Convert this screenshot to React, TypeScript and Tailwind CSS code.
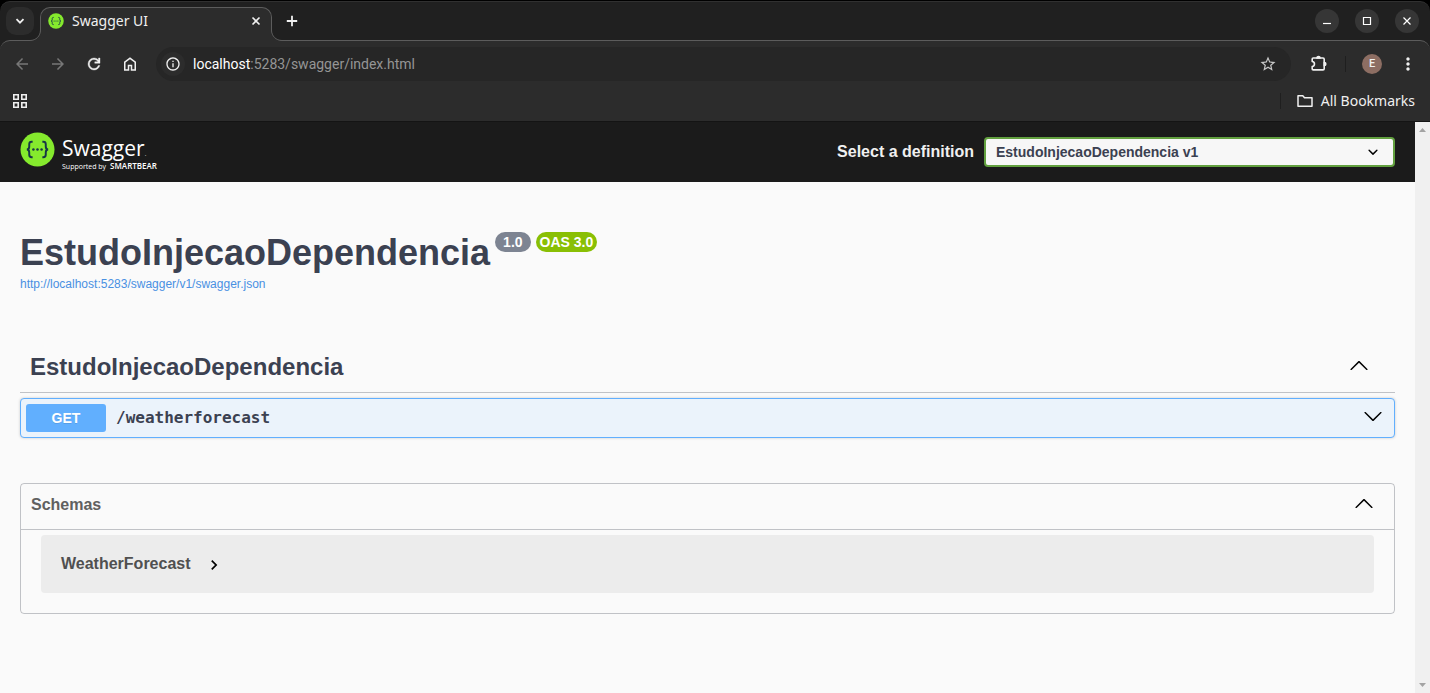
import type { ReactNode } from "react";
import { MdArrowBack, MdArrowForward, MdInfoOutline, MdMoreVert, MdStarBorder } from "react-icons/md";

const SPEC_URL = "http://localhost:5283/swagger/v1/swagger.json";

const PATHS = {
  arrowDown:
    "M17.418 6.109c.272-.268.709-.268.979 0s.271.701 0 .969l-7.908 7.83c-.27.268-.707.268-.979 0l-7.908-7.83c-.27-.268-.27-.701 0-.969.271-.268.709-.268.979 0L10 13.25l7.418-7.141z",
  arrowUp:
    "M17.418 14.908c.272.268.709.268.979 0s.271-.701 0-.969l-7.908-7.83c-.27-.268-.707-.268-.979 0l-7.908 7.83c-.27.268-.27.701 0 .969.271.268.709.268.979 0L10 7.767l7.418 7.141z",
  reload:
    "M12 20q-3.35 0-5.675-2.325T4 12t2.325-5.675T12 4q1.725 0 3.3.713T18 6.75V4h2v7h-7V9h4.2q-.8-1.4-2.188-2.2T12 6Q9.5 6 7.75 7.75T6 12t1.75 4.25T12 18q1.925 0 3.475-1.1T17.65 14h2.1q-.7 2.65-2.85 4.325T12 20Z",
  home: "M6 19h3v-6h6v6h3v-9l-6-4.5L6 10v9Zm-2 2V9l8-6 8 6v12h-7v-6h-2v6H4Z",
};

function LargeArrow({ up = false }: { up?: boolean }) {
  return (
    <svg viewBox="0 0 20 20" className="mb-1 size-5 shrink-0 fill-black" aria-hidden="true">
      <path d={up ? PATHS.arrowUp : PATHS.arrowDown} />
    </svg>
  );
}

function SwaggerMark({ className }: { className: string }) {
  return (
    <svg viewBox="0 0 36 36" className={className} aria-hidden="true">
      <circle cx="18" cy="18" r="17.5" fill="#85ea2d" />
      <g fill="none" stroke="#173647" strokeWidth="2">
        <path d="M13 10h-1c-2 0-2.500 1-2.500 2.500v2.500c0 2-.5 3-2.500 3 2 0 2.500 1 2.500 3v2.500c0 1.500.5 2.500 2.500 2.500h1" />
        <path d="M23 10h1c2 0 2.500 1 2.500 2.500v2.500c0 2 .5 3 2.500 3-2 0-2.500 1-2.500 3v2.500c0 1.500-.5 2.500-2.500 2.500h-1" />
      </g>
      <g fill="#173647">
        <circle cx="13.800" cy="18" r="1.300" />
        <circle cx="18" cy="18" r="1.300" />
        <circle cx="22.200" cy="18" r="1.300" />
      </g>
    </svg>
  );
}

function ToolbarButton({ label, dim = false, children }: { label: string; dim?: boolean; children: ReactNode }) {
  return (
    <button
      type="button"
      aria-label={label}
      className={`flex size-9 items-center justify-center ${dim ? "text-[#777777]" : "text-[#f0f0f0]"}`}
    >
      {children}
    </button>
  );
}

function WindowButton({ label, children }: { label: string; children: ReactNode }) {
  return (
    <button
      type="button"
      aria-label={label}
      className="flex size-6 items-center justify-center rounded-full bg-[#363636] text-white"
    >
      <svg viewBox="0 0 12 12" className="size-3 fill-none stroke-current" strokeWidth="1.200">
        {children}
      </svg>
    </button>
  );
}

function TabStrip() {
  return (
    <div className="bg-black pt-px">
      <div className="flex h-[39px] items-end rounded-t-[10px] border-t border-[#303030] bg-[#202020] pl-1.5">
        <button
          type="button"
          aria-label="Search tabs"
          className="mb-[5px] flex size-7 items-center justify-center rounded-[10px] bg-[#2c2c2c] text-[#f0f0f0]"
        >
          <svg viewBox="0 0 10 10" className="size-2.5 fill-none stroke-current" strokeWidth="1.800">
            <path d="M1.500 3.200 5 6.700l3.500-3.500" />
          </svg>
        </button>

        <div className="relative z-10 -mb-px ml-1.5 flex h-[34px] w-[232px] items-center rounded-t-[10px] border-x border-t border-[#5c5c5c] bg-[#2c2c2c] px-[7px] pb-2">
          {/* flared feet that join the tab to the toolbar */}
          <svg viewBox="0 0 11 11" className="absolute bottom-0 -left-[11px] size-[11px]">
            <path d="M11 0v11H0v-.5C6 10.500 10.500 6 10.500 0Z" fill="#2c2c2c" />
            <path d="M0 10.500C6 10.500 10.500 6 10.500 0" fill="none" stroke="#5c5c5c" />
          </svg>
          <svg viewBox="0 0 11 11" className="absolute -right-[11px] bottom-0 size-[11px]">
            <path d="M0 0v11h11v-.5C5 10.500.5 6 .5 0Z" fill="#2c2c2c" />
            <path d="M11 10.500C5 10.500.5 6 .5 0" fill="none" stroke="#5c5c5c" />
          </svg>
          <SwaggerMark className="size-4" />
          <span className="ml-2 flex-1 text-sm">Swagger UI</span>
          <button type="button" aria-label="Close tab" className="flex size-4 items-center justify-center">
            <svg viewBox="0 0 10 10" className="size-2.5 fill-none stroke-current" strokeWidth="1.600">
              <path d="m1.500 1.500 7 7m0-7-7 7" />
            </svg>
          </button>
        </div>

        <button type="button" aria-label="New tab" className="mb-[5px] ml-1.5 flex size-7 items-center justify-center">
          <svg viewBox="0 0 12 12" className="size-3 fill-none stroke-current" strokeWidth="1.800">
            <path d="M6 .8v10.400M.8 6h10.400" />
          </svg>
        </button>

        <div className="mr-[11px] mb-[7px] ml-auto flex gap-4">
          <WindowButton label="Minimize">
            <path d="M2 8.500h8" />
          </WindowButton>
          <WindowButton label="Maximize">
            <path d="M2.500 2.500h7v7h-7z" />
          </WindowButton>
          <WindowButton label="Close">
            <path d="m2.500 2.500 7 7m0-7-7 7" />
          </WindowButton>
        </div>
      </div>
    </div>
  );
}

function Toolbar() {
  return (
    <div className="rounded-t-[10px] border-t border-[#5c5c5c] bg-[#2c2c2c]">
      <div className="flex h-[46px] items-center pr-1 pl-1">
        <ToolbarButton label="Back" dim>
          <MdArrowBack className="size-[18px]" />
        </ToolbarButton>
        <ToolbarButton label="Forward" dim>
          <MdArrowForward className="size-[18px]" />
        </ToolbarButton>
        <ToolbarButton label="Reload">
          <svg viewBox="0 0 24 24" className="size-[18px] fill-current stroke-current" strokeWidth="0.500">
            <path d={PATHS.reload} />
          </svg>
        </ToolbarButton>
        <ToolbarButton label="Home">
          <svg viewBox="0 0 24 24" className="size-[18px] fill-current">
            <path d={PATHS.home} />
          </svg>
        </ToolbarButton>

        <div className="ml-2 flex h-[34px] flex-1 items-center rounded-full bg-[#262626] pr-3.5 pl-[5px]">
          <button
            type="button"
            aria-label="View site information"
            className="flex size-6 items-center justify-center rounded-full bg-[#2c2c2c]"
          >
            <MdInfoOutline className="size-4" />
          </button>
          <div
            className="ml-2 flex-1 font-[Roboto,sans-serif] text-sm text-[#959595]"
            role="textbox"
            aria-label="Address"
          >
            <span className="text-white">localhost</span>:5283/swagger/index.html
          </div>
          <button type="button" aria-label="Bookmark this tab" className="text-[#c8c8c8]">
            <MdStarBorder className="size-[18px]" />
          </button>
        </div>

        <div className="ml-2.5 flex items-center">
          <ToolbarButton label="Extensions">
            <svg viewBox="0 0 18 18" className="size-[18px] fill-none stroke-current" strokeWidth="1.600">
              <path
                d="M3.200 3h9.800q1.200 0 1.200 1.200v9.500q0 1.200-1.200 1.200H3.200q-1 0-1-1v-2.300c3-.6 3-4.600 0-5.200V4q0-1 1-1Z"
                strokeLinejoin="round"
              />
              <path d="M7 3a1.500 1.500 0 0 1 3 0ZM14.300 7.500a1.500 1.500 0 0 1 0 3Z" fill="currentColor" />
            </svg>
          </ToolbarButton>
          <span className="ml-2 h-4 w-px bg-[#1f1f1f]" />
          <button
            type="button"
            aria-label="Profile"
            className="ml-4 flex size-5 items-center justify-center rounded-full bg-[#8d6e63] font-[Roboto,sans-serif] text-[11px] font-medium"
          >
            E
          </button>
          <span className="ml-2">
            <ToolbarButton label="Menu">
              <MdMoreVert className="size-5" />
            </ToolbarButton>
          </span>
        </div>
      </div>

      <div className="flex h-[35px] items-start border-b border-[#141414] pr-[15px] pl-3">
        <button type="button" aria-label="Apps" className="p-px">
          <svg viewBox="0 0 14 14" className="mt-1.5 size-3.5 fill-none stroke-current" strokeWidth="1.600">
            <path d="M.8.8h4.400v4.400H.8zM8.800.8h4.400v4.400H8.800zM.8 8.800h4.400v4.400H.8zM8.800 8.800h4.400v4.400H8.800z" />
          </svg>
        </button>
        <span className="mt-1.5 ml-auto h-4 w-px bg-[#1f1f1f]" />
        <button type="button" className="mt-1 ml-4 flex h-5 items-center gap-2 text-sm">
          <svg viewBox="0 0 16 14" className="h-3.5 w-4 fill-none stroke-current" strokeWidth="1.500">
            <path d="M1 12.300V1.700h4.800l1.700 2H15v8.600Z" strokeLinejoin="round" />
          </svg>
          All Bookmarks
        </button>
      </div>
    </div>
  );
}

function Topbar() {
  return (
    <div className="flex items-center bg-[#1b1b1b] px-5 py-2.5">
      <a href="#" className="flex h-10 items-start font-['Open_Sans',sans-serif] text-white">
        <SwaggerMark className="size-[35px]" />
        <span className="ml-[7px] flex flex-col pt-1">
          <span className="text-[21px] leading-6">
            Swagger<span className="text-[6px] leading-none">.</span>
          </span>
          <span className="flex items-baseline gap-1 text-[7px] leading-3">
            Supported by <b className="text-[8px] font-semibold">SMARTBEAR</b>
          </span>
        </span>
      </a>
      <div className="ml-auto flex items-center gap-2.5">
        <label htmlFor="definition" className="text-base font-bold text-[#f0f0f0]">
          Select a definition
        </label>
        <div className="relative">
          <select
            id="definition"
            className="h-[30px] w-[411px] appearance-none rounded border-2 border-[#62a03f] bg-[#f7f7f7] pr-10 pl-2.5 text-sm font-bold text-[#3b4151]"
          >
            <option>EstudoInjecaoDependencia v1</option>
          </select>
          <svg
            viewBox="0 0 20 20"
            className="pointer-events-none absolute top-[5px] right-3 size-5"
            aria-hidden="true"
          >
            <path d="M13.418 7.859a.695.695 0 0 1 .978 0 .68.68 0 0 1 0 .969l-3.908 3.830a.697.697 0 0 1-.979 0l-3.908-3.830a.68.68 0 0 1 0-.969.695.695 0 0 1 .978 0L10 11l3.418-3.141z" />
          </svg>
        </div>
      </div>
    </div>
  );
}

function ApiInfo() {
  return (
    <section className="mt-12 mb-[50px]">
      <h1 className="flex items-start text-4xl leading-[46px] font-bold text-[#3b4151]">
        EstudoInjecaoDependencia
        <span className="mt-0.5 ml-[5px] flex gap-[5px] text-sm leading-5 text-white">
          <span className="rounded-full bg-[#7d8492] px-2">1.0</span>
          <span className="rounded-full bg-[#89bf04] px-1">OAS 3.0</span>
        </span>
      </h1>
      <a href={SPEC_URL} className="block text-xs text-[#4990e2]">
        {SPEC_URL}
      </a>
    </section>
  );
}

function Operations() {
  return (
    <section>
      <h3 className="border-b border-[#3b4151]/30">
        <button
          type="button"
          className="flex h-[50px] w-full items-center justify-between pr-[26px] pl-2.5 text-2xl font-bold text-[#3b4151]"
        >
          EstudoInjecaoDependencia
          <LargeArrow up />
        </button>
      </h3>
      <button
        type="button"
        className="mt-[5px] flex h-10 w-full items-center rounded border border-[#61affe] bg-[#ebf3fb] pr-[11px] pl-[5px] shadow-[0_0_3px_rgba(0,0,0,0.19)]"
      >
        <span className="w-20 rounded-[3px] bg-[#61affe] text-center text-sm leading-7 font-bold text-white [text-shadow:0_1px_0_rgba(0,0,0,0.1)]">
          GET
        </span>
        <span className="ml-2.5 flex-1 text-left font-['DejaVu_Sans_Mono',monospace] text-base font-bold text-[#3b4151]">
          /weatherforecast
        </span>
        <LargeArrow />
      </button>
    </section>
  );
}

function Schemas() {
  return (
    <section className="mt-[45px] rounded border border-[#3b4151]/30">
      <h4 className="border-b border-[#3b4151]/30">
        <button
          type="button"
          className="flex h-[45px] w-full items-center justify-between pr-5 pb-1 pl-2.5 text-base font-bold text-[#606060]"
        >
          Schemas
          <LargeArrow up />
        </button>
      </h4>
      <div className="mx-5 mt-[5px] mb-5 rounded bg-[#ececec] px-5 py-[17px]">
        <button type="button" className="flex items-center gap-[13px] text-base font-bold text-[#505050]">
          WeatherForecast
          <svg viewBox="0 0 24 24" className="mt-0.5 size-5 fill-black" aria-hidden="true">
            <path d="M10 6 8.590 7.410 13.170 12l-4.580 4.590L10 18l6-6z" />
          </svg>
        </button>
      </div>
    </section>
  );
}

function Scrollbar() {
  return (
    <div className="flex w-[15px] flex-col justify-between bg-[#f0f0f0] py-1" aria-hidden="true">
      <svg viewBox="0 0 15 8" className="h-2 w-full fill-[#a3a3a3]">
        <path d="M7.500 2 11 6H4Z" />
      </svg>
      <svg viewBox="0 0 15 8" className="h-2 w-full fill-[#a3a3a3]">
        <path d="M7.500 6 11 2H4Z" />
      </svg>
    </div>
  );
}

export default function App() {
  return (
    <div className="flex min-h-screen flex-col bg-[#202020]">
      <header className="font-['Noto_Sans',sans-serif] text-[#f0f0f0]">
        <TabStrip />
        <Toolbar />
      </header>
      <div className="flex flex-1 bg-[#fafafa] font-['Liberation_Sans',sans-serif]">
        <main className="flex-1">
          <Topbar />
          <div className="px-5 pb-10">
            <ApiInfo />
            <Operations />
            <Schemas />
          </div>
        </main>
        <Scrollbar />
      </div>
    </div>
  );
}
